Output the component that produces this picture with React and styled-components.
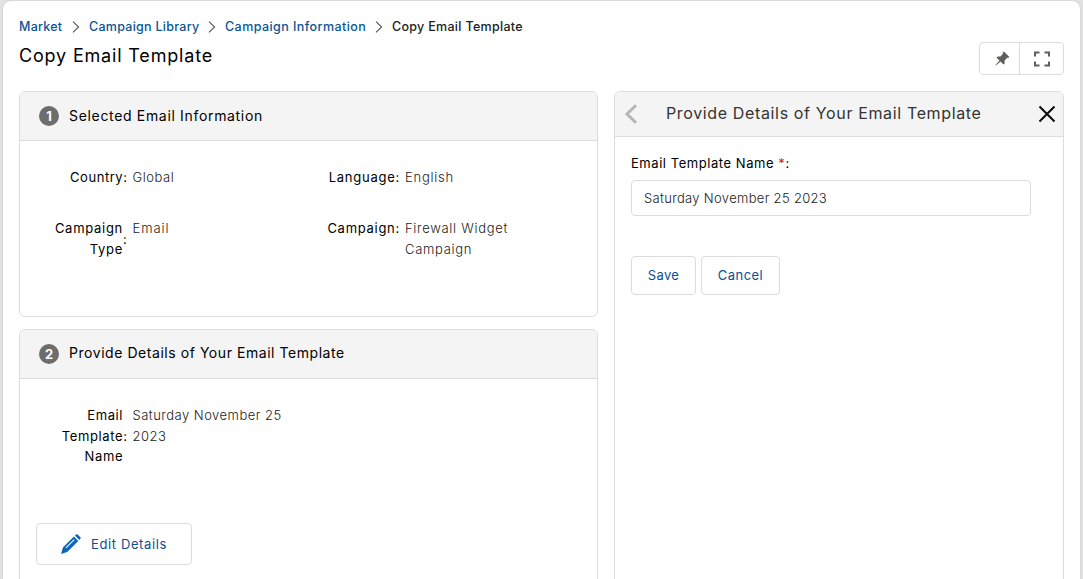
import React from "react";
import styled, { createGlobalStyle } from "styled-components";

const GlobalStyle = createGlobalStyle`
  *, *::before, *::after { box-sizing: border-box; }
  body {
    margin: 0;
    background: #e2e2e2;
    font-family: Inter, "Open Sans", sans-serif;
    overflow: hidden;
  }
  h1, h2, h3, dl, dt, dd { margin: 0; font-weight: 400; }
`;

const line = "#dcdcdc";
const blue = "#0b4f91";

const tracking = (p) => `letter-spacing: ${p.$track || 0}px;`;

const Sheet = styled.main`
  height: 578px;
  margin: 1px 3px 0;
  padding: 0 16px;
  background: #fff;
  border-radius: 8px 8px 0 0;
  box-shadow: 0 0 2px rgba(0, 0, 0, 0.15);
  overflow: hidden;
`;

const TopBar = styled.header`
  display: flex;
  justify-content: space-between;
  height: 90px;
`;

const Heading = styled.div`
  padding-top: 16px;
`;

const Crumbs = styled.nav`
  display: flex;
  align-items: center;
  height: 20px;
`;

const Crumb = styled.span`
  width: ${(p) => p.$width}px;
  padding-bottom: 2px;
  font-size: 12.5px;
  font-weight: 500;
  color: ${(p) => (p.$current ? "#222" : "#0a5596")};
  white-space: nowrap;
  ${tracking}
`;

const CrumbArrow = styled.svg`
  width: 8px;
  height: 12px;
  margin: 0 9px;
  fill: none;
  stroke: #555;
  stroke-width: 1.1;
`;

const Title = styled.h1`
  margin-top: 6px;
  font-size: 18px;
  line-height: 26px;
  color: #000;
  ${tracking}
`;

const ToolGroup = styled.div`
  display: flex;
  width: 85px;
  height: 33px;
  margin-top: 41px;
  border: 1px solid ${line};
  border-radius: 4px;
`;

const Tool = styled.button`
  display: flex;
  align-items: center;
  justify-content: center;
  width: ${(p) => p.$width}px;
  padding: ${(p) => p.$pad || "0"};
  border: 0;
  border-left: ${(p) => (p.$divided ? `1px solid ${line}` : "0")};
  background: none;
`;

const Columns = styled.div`
  display: grid;
  grid-template-columns: 579px 450px;
  column-gap: 16px;
`;

const Stack = styled.div`
  display: flex;
  flex-direction: column;
  gap: 12px;
`;

const Card = styled.section`
  height: ${(p) => p.$height}px;
  border: 1px solid ${line};
  border-radius: 6px;
  overflow: hidden;
`;

const CardHeader = styled.header`
  display: flex;
  align-items: center;
  gap: 10px;
  height: 49px;
  padding-left: 19px;
  background: #f4f4f4;
  border-bottom: 1px solid ${line};
`;

const Badge = styled.span`
  display: flex;
  align-items: center;
  justify-content: center;
  width: 20px;
  height: 20px;
  border-radius: 50%;
  background: #6d6d6d;
  color: #fff;
  font-size: 13px;
  font-weight: 700;
`;

const CardTitle = styled.h2`
  padding-bottom: ${(p) => p.$lift || 0}px;
  font-size: 14px;
  line-height: 20px;
  color: #000;
  ${tracking}
`;

const Fields = styled.dl`
  display: grid;
  grid-template-columns: 272.5px 272.5px;
  row-gap: 30px;
  padding: 26px 16px 0;
  font-size: 13px;
  line-height: ${(p) => p.$leading}px;
`;

const Field = styled.div`
  display: flex;
  align-items: flex-start;
`;

const Label = styled.dt`
  display: flex;
  align-items: center;
  justify-content: flex-end;
  width: 91.5px;
  color: #000;
  ${tracking}
`;

const LabelText = styled.span`
  width: 88px;
  text-align: right;
`;

const Value = styled.dd`
  width: 166px;
  padding-left: 5px;
  font-weight: 300;
  color: #222;
  ${tracking}
`;

const Button = styled.button`
  display: flex;
  align-items: center;
  justify-content: center;
  gap: 10px;
  width: ${(p) => p.$width}px;
  height: ${(p) => p.$height}px;
  padding: 0 0 ${(p) => p.$lift || 0}px;
  border: 1px solid ${line};
  border-radius: 4px;
  background: #fff;
  color: ${blue};
  font-family: inherit;
  font-size: 13px;
  ${tracking}
`;

const CardFooter = styled.footer`
  padding: 56px 16px 0;
`;

const PanelHeader = styled.header`
  display: flex;
  align-items: center;
  height: 45px;
  padding: 0 7px 0 9px;
  background: #f4f4f4;
  border-bottom: 1px solid ${line};
`;

const PanelTitle = styled.h2`
  flex: 1;
  padding: 0 0 2px 28px;
  font-size: 16px;
  line-height: 24px;
  color: #333;
  white-space: nowrap;
  ${tracking}
`;

const PanelBody = styled.form`
  padding: 16px;
`;

const InputLabel = styled.label`
  display: block;
  font-size: 13px;
  line-height: 20px;
  color: #000;
  ${tracking}
`;

const Required = styled.span`
  color: #d0201b;
`;

const TextInput = styled.input`
  display: block;
  width: 400px;
  height: 36px;
  margin-top: 7px;
  padding: 0 12px;
  border: 1px solid ${line};
  border-radius: 4px;
  font-family: inherit;
  font-size: 13px;
  font-weight: 300;
  color: #222;
  ${tracking}
`;

const Actions = styled.div`
  display: flex;
  gap: 5px;
  margin-top: 40px;
`;

const Separator = () => (
  <CrumbArrow viewBox="0 0 8 12">
    <path d="M1 .6 6.6 6 1 11.4" />
  </CrumbArrow>
);

const PinIcon = () => (
  <svg width="15" height="15" viewBox="0 0 15 15" fill="#5f5f5a">
    <path d="M8.9.4 14.4 5.9 13.2 7 12.2 6.8 9.6 9.5 9.6 12.4 8.5 13.4 5.5 10.4 1.2 14.2.5 14.4.7 13.7 4.5 9.4 1.5 6.4 2.6 5.4 5.4 5.4 8 2.8 7.8 1.5Z" />
  </svg>
);

const ExpandIcon = () => (
  <svg width="16" height="16" viewBox="0 0 16 16" fill="none" stroke="#5f5f5a" strokeWidth="2">
    <path d="M1 5.5V1.5H5.5M10.5 1.5H15V5.5M15 10.5V14.5H10.5M5.5 14.5H1V10.5" />
  </svg>
);

const BackIcon = () => (
  <svg width="14" height="20" viewBox="0 0 14 20" fill="none" stroke="#b5b5b5" strokeWidth="3">
    <path d="M12 1.2 3 10 12 18.8" />
  </svg>
);

const CloseIcon = () => (
  <svg width="18" height="18" viewBox="0 0 18 18" fill="none" stroke="#0a0a0a" strokeWidth="2">
    <path d="M1.5 1.5 16.5 16.5M16.5 1.5 1.5 16.5" />
  </svg>
);

const PencilIcon = () => (
  <svg width="20" height="20" viewBox="0 0 20 20" fill="#0b66b8">
    <path
      fillRule="evenodd"
      d="M12.9 2.6 17.3 7.1 6.2 18 .1 19.9 1.9 13.5ZM12.8 5.3 4.5 13.5 5.3 14.3 13.6 6.1Z"
    />
    <path d="M13.9 1.6 15.2.4Q15.9-.1 16.6.5L19.4 3.3Q20 4 19.4 4.8L18.3 6Z" />
  </svg>
);

function FieldRow({ label, value, track, valueTrack }) {
  return (
    <Field>
      <Label $track={track}>
        <LabelText>{label}</LabelText>:
      </Label>
      <Value $track={valueTrack}>{value}</Value>
    </Field>
  );
}

export default function App() {
  return (
    <>
      <GlobalStyle />
      <Sheet>
        <TopBar>
          <Heading>
            <Crumbs>
              <Crumb $width={44} $track={0.25}>Market</Crumb>
              <Separator />
              <Crumb $width={110} $track={0.27}>Campaign Library</Crumb>
              <Separator />
              <Crumb $width={141} $track={0.43}>Campaign Information</Crumb>
              <Separator />
              <Crumb $width={132} $track={0.3} $current>Copy Email Template</Crumb>
            </Crumbs>
            <Title $track={0.82}>Copy Email Template</Title>
          </Heading>
          <ToolGroup>
            <Tool $width={39} $pad="0 0 0 6px"><PinIcon /></Tool>
            <Tool $width={44} $divided><ExpandIcon /></Tool>
          </ToolGroup>
        </TopBar>
        <Columns>
          <Stack>
            <Card $height={226}>
              <CardHeader>
                <Badge>1</Badge>
                <CardTitle $track={0.67}>Selected Email Information</CardTitle>
              </CardHeader>
              <Fields $leading={21}>
                <FieldRow label="Country" value="Global" track={0.55} valueTrack={0.55} />
                <FieldRow label="Language" value="English" track={0.75} valueTrack={0.75} />
                <FieldRow label="Campaign Type" value="Email" track={0.72} valueTrack={0.95} />
                <FieldRow label="Campaign" value="Firewall Widget Campaign" track={0.72} valueTrack={0.7} />
              </Fields>
            </Card>
            <Card $height={270}>
              <CardHeader>
                <Badge>2</Badge>
                <CardTitle $track={0.55} $lift={2}>Provide Details of Your Email Template</CardTitle>
              </CardHeader>
              <Fields $leading={20.5}>
                <FieldRow
                  label="Email Template Name"
                  value="Saturday November 25 2023"
                  track={0.62}
                  valueTrack={0.48}
                />
              </Fields>
              <CardFooter>
                <Button $width={156} $height={42} $track={0.62}>
                  <PencilIcon />
                  Edit Details
                </Button>
              </CardFooter>
            </Card>
          </Stack>
          <Card $height={508}>
            <PanelHeader>
              <BackIcon />
              <PanelTitle $track={0.64}>Provide Details of Your Email Template</PanelTitle>
              <CloseIcon />
            </PanelHeader>
            <PanelBody>
              <InputLabel $track={0.55}>
                Email Template Name <Required>*</Required>:
              </InputLabel>
              <TextInput defaultValue="Saturday November 25 2023" $track={0.32} />
              <Actions>
                <Button type="button" $width={65} $height={39} $lift={2} $track={0.35}>Save</Button>
                <Button type="button" $width={79} $height={39} $lift={2} $track={0.45}>Cancel</Button>
              </Actions>
            </PanelBody>
          </Card>
        </Columns>
      </Sheet>
    </>
  );
}
